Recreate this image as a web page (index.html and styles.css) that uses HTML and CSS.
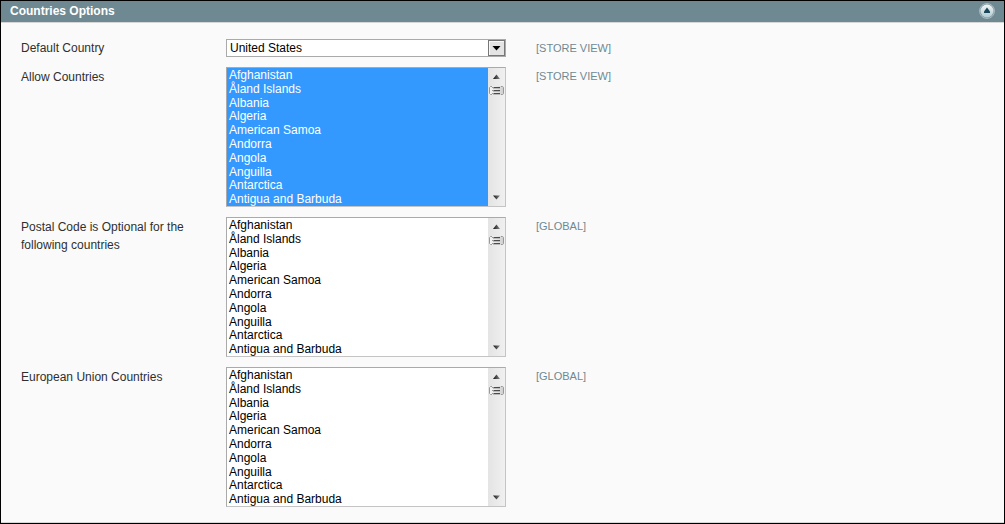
FILE: index.html
```
<!DOCTYPE html>
<html lang="en">
<head>
<meta charset="utf-8">
<title>Countries Options</title>
<meta name="viewport" content="width=device-width, initial-scale=1">
<link rel="stylesheet" href="styles.css">
</head>
<body>
<svg class="defs" aria-hidden="true">
  <defs>
    <linearGradient id="thumb" x1="0" x2="1" y1="0" y2="0">
      <stop offset="0" stop-color="#f6f6f6"/><stop offset=".5" stop-color="#e6e6e6"/><stop offset="1" stop-color="#cccccc"/>
    </linearGradient>
    <linearGradient id="arrow" x1="0" x2="1" y1="0" y2="0">
      <stop offset="0" stop-color="#111"/><stop offset="1" stop-color="#8a8a8a"/>
    </linearGradient>
    <linearGradient id="disc" x1="0" x2="0" y1="0" y2="1">
      <stop offset="0" stop-color="#f2f6f7"/><stop offset="1" stop-color="#b2cad0"/>
    </linearGradient>
    <symbol id="up" viewBox="0 0 17 30">
      <path d="M5 11 L8.500 6.500 L12 11Z" fill="url(#arrow)"/>
      <rect x="1" y="18" width="15" height="9" rx="2" fill="url(#thumb)"/>
      <path d="M4 18.500H2.500L1.500 19.500V25.500L2.500 26.500H4M13 18.500H14.500L15.500 19.500V25.500L14.500 26.500H13" stroke="#999" fill="none"/>
      <path d="M4 19.500h2M4 22.500h2M4 25.500h2" stroke="#999"/>
      <path d="M6 19.500h6M6 22.500h6M6 25.500h6" stroke="#4c4c4c"/>
      <path d="M5 20.500h7M5 23.500h7M5 26.500h7" stroke="#bbb"/>
    </symbol>
    <symbol id="down" viewBox="0 0 17 17">
      <path d="M5 6.500H12L8.500 10.500Z" fill="url(#arrow)"/>
    </symbol>
  </defs>
</svg>
<section class="panel">
  <header class="panel-head">
    <h1 class="panel-title">Countries Options</h1>
    <button class="toggle" type="button" aria-label="Collapse section">
      <svg width="16" height="16" viewBox="0 0 16 16" aria-hidden="true">
        <circle cx="8" cy="8" r="7.500" fill="#7f979f" stroke="#a7b9be"/>
        <circle cx="8" cy="8" r="6.500" fill="url(#disc)"/>
        <path d="M5 10V8.500L8 4.500L11 8.500V10Z" fill="#184858"/>
      </svg>
    </button>
  </header>
  <form class="fields">
    <div class="row">
      <label class="label" for="default-country">Default Country</label>
      <div class="drop">
        <select class="drop-select" id="default-country"><option>United States</option></select>
        <svg class="drop-arrow" width="18" height="16" viewBox="0 0 18 16" aria-hidden="true">
          <rect x="1.500" y=".5" width="16" height="15" fill="#e4e4e4" stroke="#777"/>
          <path d="M2 1.500H17M2.500 1V15" stroke="#f8f8f8" fill="none"/>
          <path d="M5.500 6H13.500L9.500 10.500Z" fill="#000"/>
        </svg>
      </div>
      <span class="scope">[STORE VIEW]</span>
    </div>
    <div class="row">
      <label class="label label-list" for="allow">Allow Countries</label>
      <div class="list">
        <select class="list-select" id="allow" multiple size="10">
          <option selected>Afghanistan</option><option selected>Åland Islands</option><option selected>Albania</option><option selected>Algeria</option><option selected>American Samoa</option><option selected>Andorra</option><option selected>Angola</option><option selected>Anguilla</option><option selected>Antarctica</option><option selected>Antigua and Barbuda</option>
        </select>
        <div class="bar" aria-hidden="true"><svg width="17" height="30"><use href="#up"/></svg><svg width="17" height="17"><use href="#down"/></svg></div>
      </div>
      <span class="scope">[STORE VIEW]</span>
    </div>
    <div class="row">
      <label class="label label-list" for="postal">Postal Code is Optional for the following countries</label>
      <div class="list">
        <select class="list-select" id="postal" multiple size="10">
          <option>Afghanistan</option><option>Åland Islands</option><option>Albania</option><option>Algeria</option><option>American Samoa</option><option>Andorra</option><option>Angola</option><option>Anguilla</option><option>Antarctica</option><option>Antigua and Barbuda</option>
        </select>
        <div class="bar" aria-hidden="true"><svg width="17" height="30"><use href="#up"/></svg><svg width="17" height="17"><use href="#down"/></svg></div>
      </div>
      <span class="scope">[GLOBAL]</span>
    </div>
    <div class="row">
      <label class="label label-list" for="eu">European Union Countries</label>
      <div class="list">
        <select class="list-select" id="eu" multiple size="10">
          <option>Afghanistan</option><option>Åland Islands</option><option>Albania</option><option>Algeria</option><option>American Samoa</option><option>Andorra</option><option>Angola</option><option>Anguilla</option><option>Antarctica</option><option>Antigua and Barbuda</option>
        </select>
        <div class="bar" aria-hidden="true"><svg width="17" height="30"><use href="#up"/></svg><svg width="17" height="17"><use href="#down"/></svg></div>
      </div>
      <span class="scope">[GLOBAL]</span>
    </div>
  </form>
</section>
</body>
</html>
```
FILE: styles.css
```
* { box-sizing: border-box; }
body {
  margin: 0;
  background: #fafafa;
  color: #2f2f2f;
  font: 12px/18px "Liberation Sans", Arial, sans-serif;
}
.defs { position: absolute; width: 0; height: 0; }
.panel {
  border: 1px solid #000;
  background: #fafafa;
}
.panel-head {
  display: flex;
  align-items: flex-start;
  justify-content: space-between;
  height: 22px;
  padding: 1px 9px 0;
  background: #6f8992;
  border-bottom: 1px solid #d6d6d6;
}
.panel-title {
  margin: 0;
  color: #fff;
  font-size: 12px;
  font-weight: bold;
}
.toggle {
  display: flex;
  padding: 1px 0;
  border: 0;
  background: none;
}
.fields {
  display: grid;
  gap: 10px;
  padding: 16px 20px 15px;
  border-bottom: 1px solid #d6d6d6;
}
.row {
  display: grid;
  grid-template-columns: 185px 280px 1fr;
  column-gap: 20px;
  align-items: start;
}
.label-list { padding-top: 1px; }
.scope {
  padding-left: 10px;
  color: #6f8992;
  font-size: 11px;
}
.drop {
  display: grid;
  height: 18px;
  border: 1px solid #aaa;
  background: #fff;
}
.drop-select, .drop-arrow { grid-area: 1 / 1; }
.drop-select {
  appearance: none;
  width: 100%;
  height: 16px;
  margin: 0;
  padding: 0 20px 0 3px;
  border: 0;
  border-radius: 0;
  background: #fff;
  color: #000;
  font: 12px/16px "Liberation Sans", Arial, sans-serif;
}
.drop-arrow { justify-self: end; pointer-events: none; }
.list {
  display: flex;
  height: 140px;
  border: 1px solid #aaa;
  border-right-color: #c4c4c4;
  border-bottom-color: #c4c4c4;
  background: #fff;
}
.list-select {
  flex: 1;
  min-width: 0;
  height: 138px;
  margin: 0;
  padding: 0;
  border: 0;
  border-radius: 0;
  outline: 0;
  background: #fff;
  color: #000;
  font: 12px/14px "Liberation Sans", Arial, sans-serif;
  scrollbar-width: none;
}
.list-select option {
  height: 14px;
  min-height: 13px;
  padding: 0 2px;
  line-height: 14px;
}
/* Ten rows share 138px, so every fifth one is a pixel shorter. */
.list-select option:nth-child(5n+3) { height: 13px; }
.list-select option:checked {
  background: linear-gradient(#39f, #39f);
  color: #fff;
}
.bar {
  display: flex;
  flex-direction: column;
  justify-content: space-between;
  width: 17px;
  background: linear-gradient(90deg, #e4e4e4, #f0f0f0);
}
```
